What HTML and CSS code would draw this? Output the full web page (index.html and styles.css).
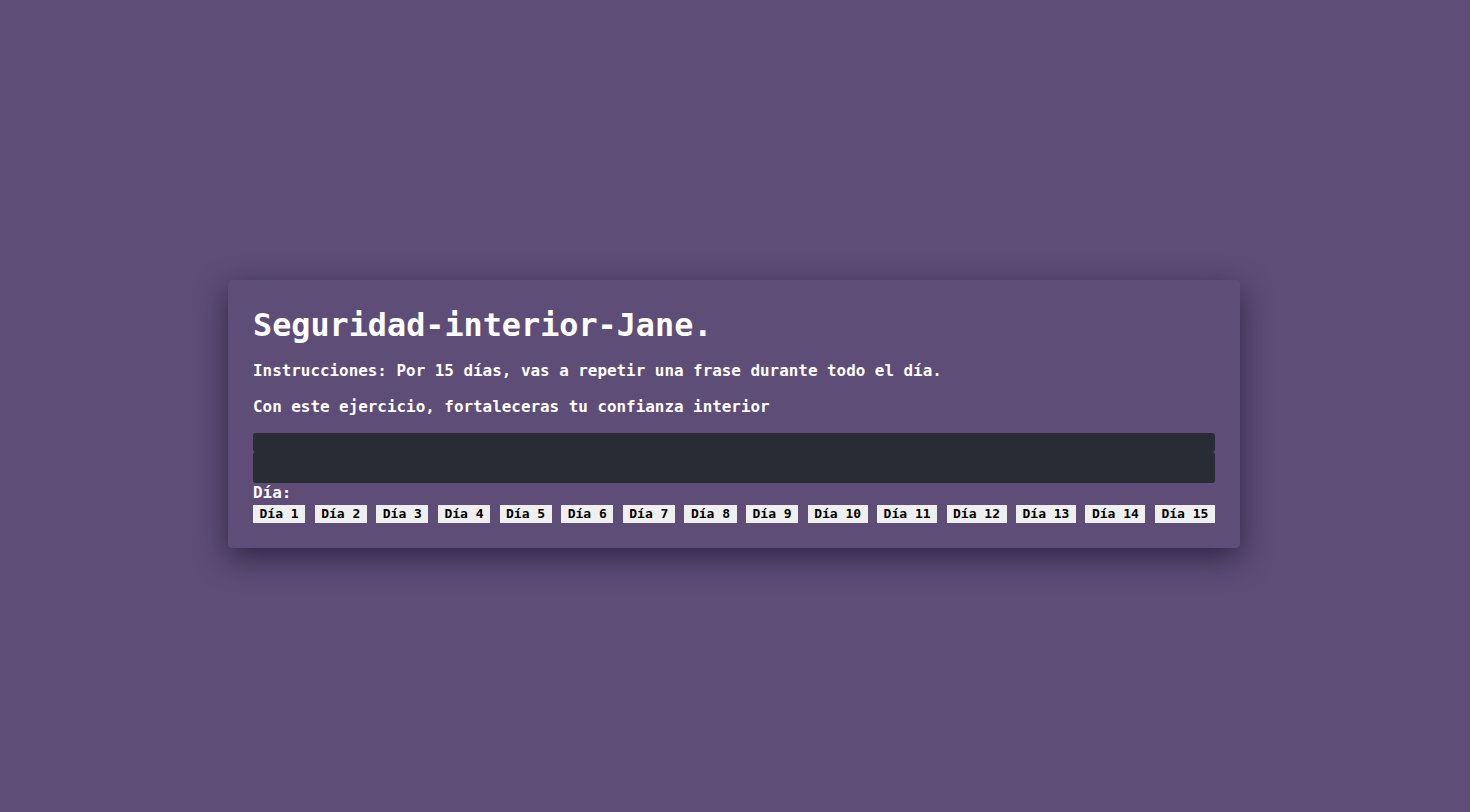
FILE: index.html
```html
<!DOCTYPE html>
<html lang="es">
<head>
<meta charset="utf-8">
<title>Seguridad-interior-Jane.</title>
<link rel="stylesheet" href="styles.css">
</head>
<body>
<main class="card">
  <h1 class="title">Seguridad-interior-Jane.</h1>
  <p class="text">Instrucciones: Por 15 días, vas a repetir una frase durante todo el día.</p>
  <p class="text">Con este ejercicio, fortaleceras tu confianza interior</p>
  <div class="phrase">
    <div class="phrase-top"></div>
    <div class="phrase-body"></div>
  </div>
  <div class="label">Día:</div>
  <div class="days">
    <button class="day">Día 1</button>
    <button class="day">Día 2</button>
    <button class="day">Día 3</button>
    <button class="day">Día 4</button>
    <button class="day">Día 5</button>
    <button class="day">Día 6</button>
    <button class="day">Día 7</button>
    <button class="day">Día 8</button>
    <button class="day">Día 9</button>
    <button class="day">Día 10</button>
    <button class="day">Día 11</button>
    <button class="day">Día 12</button>
    <button class="day">Día 13</button>
    <button class="day">Día 14</button>
    <button class="day">Día 15</button>
  </div>
</main>
</body>
</html>
```
FILE: styles.css
```css
html, body {
  background: #5e4d77;
}
body {
  margin: 8px;
  min-height: 812px;
  display: flex;
  align-items: center;
  justify-content: center;
  font-family: "DejaVu Sans Mono", "Liberation Mono", monospace;
  color: #ffffff;
}
.card {
  box-sizing: border-box;
  width: 1012px;
  margin-right: 2px;
  padding: 25px;
  background: #5e4d77;
  border-radius: 4px;
  box-shadow: 0 10px 30px rgba(20, 12, 35, 0.6);
  display: flex;
  flex-direction: column;
}
.title {
  margin: 0 0 16px;
  font-size: 31.8px;
  line-height: 40px;
  font-weight: bold;
}
.text {
  margin: 0 0 16px;
  font-size: 15.9px;
  line-height: 20px;
  font-weight: bold;
}
.phrase {
  display: flex;
  flex-direction: column;
  height: 50px;
}
.phrase-top {
  height: 19px;
  background: #2a2c35;
  border-radius: 3px;
}
.phrase-body {
  flex: 1;
  background: #2a2c35;
  border-radius: 3px;
}
.label {
  font-size: 15.9px;
  line-height: 20px;
  font-weight: bold;
}
.days {
  margin-top: 2px;
  display: flex;
  justify-content: space-between;
}
.day {
  height: 18px;
  margin: 0;
  padding: 0 6.5px;
  border: none;
  background: #efefef;
  color: #000;
  font-family: "DejaVu Sans Mono", "Liberation Mono", monospace;
  font-size: 13px;
  font-weight: bold;
  line-height: 18px;
  white-space: nowrap;
}
```
